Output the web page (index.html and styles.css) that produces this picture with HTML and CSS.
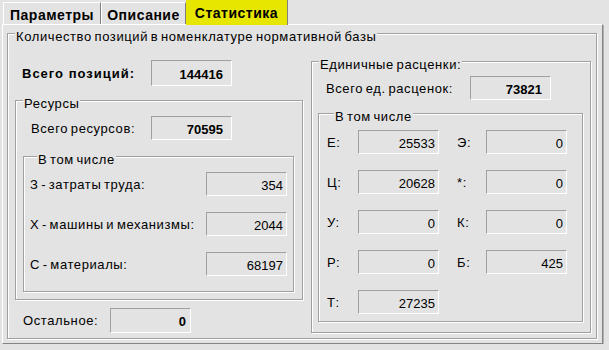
FILE: index.html
```html
<!DOCTYPE html>
<html lang="ru">
<head>
  <meta charset="UTF-8">
  <title>Статистика</title>
  <link rel="stylesheet" href="styles.css">
</head>
<body>

  <!-- Tabs -->
  <div class="tabs">
    <div class="tab tab-params">Параметры</div>
    <div class="tab tab-descr">Описание</div>
    <div class="tab tab-stat active">Статистика</div>
  </div>

  <!-- Statistics page -->
  <div class="panel">
    <div class="group outer">
      <div class="group-title">Количество позиций в номенклатуре нормативной базы</div>

      <div class="columns">
        <div class="col-left">
          <div class="row row-total">
            <span class="label bold">Всего позиций:</span>
            <span class="box big bold">144416</span>
          </div>

          <div class="group res">
            <div class="group-title">Ресурсы</div>
            <div class="row row-res">
              <span class="label">Всего ресурсов:</span>
              <span class="box bold">70595</span>
            </div>

            <div class="group res-sub">
              <div class="group-title">В том числе</div>
              <div class="row">
                <span class="label">З - затраты труда:</span>
                <span class="box">354</span>
              </div>
              <div class="row">
                <span class="label">Х - машины и механизмы:</span>
                <span class="box">2044</span>
              </div>
              <div class="row">
                <span class="label">С - материалы:</span>
                <span class="box">68197</span>
              </div>
            </div>
          </div>

          <div class="row row-other">
            <span class="label">Остальное:</span>
            <span class="box other bold">0</span>
          </div>
        </div>

        <div class="col-right">
          <div class="group units">
            <div class="group-title">Единичные расценки:</div>
            <div class="row row-units">
              <span class="label">Всего ед. расценок:</span>
              <span class="box bold">73821</span>
            </div>

            <div class="group units-sub">
              <div class="group-title">В том числе</div>
              <div class="fields">
                <div class="field"><span class="label">Е:</span><span class="box">25533</span></div>
                <div class="field"><span class="label">Э:</span><span class="box">0</span></div>
                <div class="field"><span class="label">Ц:</span><span class="box">20628</span></div>
                <div class="field"><span class="label">*:</span><span class="box">0</span></div>
                <div class="field"><span class="label">У:</span><span class="box">0</span></div>
                <div class="field"><span class="label">К:</span><span class="box">0</span></div>
                <div class="field"><span class="label">Р:</span><span class="box">0</span></div>
                <div class="field"><span class="label">Б:</span><span class="box">425</span></div>
                <div class="field"><span class="label">Т:</span><span class="box">27235</span></div>
              </div>
            </div>
          </div>
        </div>
      </div>
    </div>
  </div>

</body>
</html>
```

FILE: styles.css
```css
body {
  margin: 0;
  background-color: #e3e3e3;
  font-family: "Liberation Sans", Arial, sans-serif;
  font-size: 13px;
  line-height: 13px;
  color: #000;
}

/* tabs */
.tabs {
  display: flex;
  align-items: flex-end;
  height: 24px;
  padding-left: 3px;
}

.tab {
  box-sizing: border-box;
  height: 22px;
  padding-top: 5px;
  border-top: 1px solid #fff;
  border-left: 1px solid #fff;
  border-right: 1px solid #808080;
  font-size: 14px;
  line-height: 14px;
  font-weight: bold;
  letter-spacing: 0.5px;
  text-align: center;
}

.tab-params { width: 98px; }
.tab-descr { width: 85px; }

.tab-stat {
  width: 102px;
}

.tab.active {
  height: 25px;
  margin-bottom: -1px;
  padding-top: 6px;
  background-color: #e6e600;
  border-top: none;
  border-left: none;
  position: relative;
}

/* tab page */
.panel {
  box-sizing: border-box;
  width: 601px;
  height: 320px;
  margin-left: 2px;
  border-top: 1px solid #fff;
  border-left: 1px solid #fff;
  border-right: 1px solid #858585;
  border-bottom: 1px solid #858585;
  box-shadow: 1px 1px 0 #b0b0b0;
}

/* etched group boxes */
.group {
  box-sizing: border-box;
  border: 1px solid #a0a0a0;
  box-shadow: inset 1px 1px 0 #fff, 1px 1px 0 #fff;
}

.group-title,
.label {
  letter-spacing: 0.6px;
  word-spacing: -1.5px;
}

.group-title {
  display: table;
  margin: -4px 0 0 7px;
  padding: 0 1px;
  background-color: #e3e3e3;
}

.outer {
  width: 590px;
  height: 306px;
  margin: 8px 0 0 4px;
}

.columns {
  display: flex;
  gap: 8px;
  padding-left: 7px;
}

.col-left { width: 288px; }
.col-right { width: 280px; }

/* label + value rows */
.row {
  display: flex;
  align-items: center;
}

.label {
  white-space: nowrap;
}

.bold { font-weight: bold; }

.label.bold {
  letter-spacing: 1px;
  word-spacing: 0;
}

.box {
  box-sizing: border-box;
  width: 81px;
  height: 24px;
  padding: 6px 3px 0 0;
  border-top: 1px solid #a0a0a0;
  border-left: 1px solid #a0a0a0;
  border-bottom: 1px solid #fff;
  border-right: 1px solid #fff;
  text-align: right;
}

.box.bold { padding-right: 8px; }
.box.big { height: 26px; padding-top: 7px; }
.box.other { height: 25px; padding-right: 4px; }

.row-total { margin-top: 17px; padding-left: 7px; }
.row-total .label { width: 129px; }

.res {
  width: 288px;
  height: 200px;
  margin-top: 14px;
}

.row-res { margin-top: 6px; padding-left: 15px; }
.row-res .label { width: 120px; }

.res-sub {
  width: 271px;
  height: 136px;
  margin: 16px 0 0 7px;
  padding: 0 6px;
}

.res-sub .row {
  justify-content: space-between;
  margin-top: 16px;
}

.res-sub .group-title + .row { margin-top: 6px; }

.row-other { margin-top: 8px; padding-left: 8px; }
.row-other .label { width: 87px; }

.units {
  width: 280px;
  height: 272px;
  margin-top: 18px;
}

.row-units { margin-top: 5px; padding-left: 14px; }
.row-units .label { width: 144px; }

.units-sub {
  width: 265px;
  height: 209px;
  margin: 13px 0 0 6px;
  padding-left: 8px;
}

.fields {
  display: grid;
  grid-template-columns: auto auto;
  justify-content: start;
  column-gap: 18px;
  row-gap: 16px;
  margin-top: 7px;
}

.field {
  display: flex;
  align-items: center;
}

.field .label { width: 31px; }
.field:nth-child(even) .label { width: 29px; }
```
